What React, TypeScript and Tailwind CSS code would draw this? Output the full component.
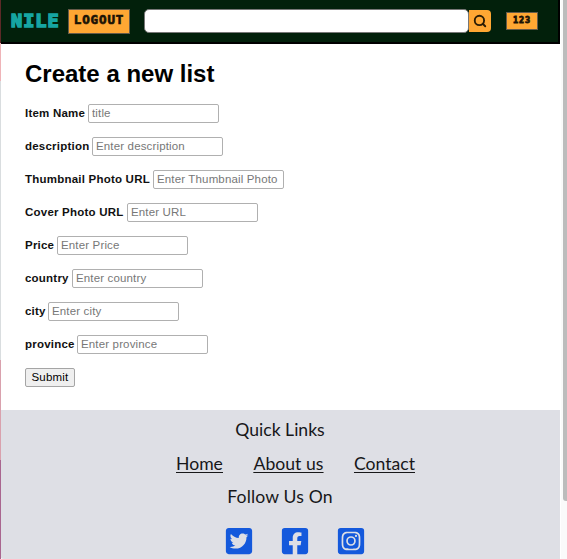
import { Search } from "lucide-react";
import { FaFacebookSquare, FaInstagramSquare, FaTwitterSquare } from "react-icons/fa";

const fields = [
  { label: "Item Name", placeholder: "title", width: "w-[63px]" },
  { label: "description", placeholder: "Enter description", width: "w-[67px]" },
  { label: "Thumbnail Photo URL", placeholder: "Enter Thumbnail Photo", width: "w-[128px]" },
  { label: "Cover Photo URL", placeholder: "Enter URL", width: "w-[102px]" },
  { label: "Price", placeholder: "Enter Price", width: "w-[32px]" },
  { label: "country", placeholder: "Enter country", width: "w-[47px]" },
  { label: "city", placeholder: "Enter city", width: "w-[23px]" },
  { label: "province", placeholder: "Enter province", width: "w-[52px]" },
];

function Header() {
  return (
    <header className="flex h-[44px] w-[560px] items-center border-r-2 border-b-2 border-black bg-[#02200b] pl-[11px] font-['DejaVu_Sans_Mono',monospace] font-bold">
      <span className="w-[57px] text-[18.5px] leading-none tracking-[1px] text-[#16a5a2] [-webkit-text-stroke:1.6px_#16a5a2]">NILE</span>
      <button className="h-[25px] w-[62px] border border-[#665a49] bg-[#ffa733] pb-px text-[12.5px] leading-none tracking-[0.9px] text-[#1b1305] [-webkit-text-stroke:0.7px_#1b1305]">LOGOUT</button>
      <input aria-label="Search" className="ml-[14px] h-6 w-[325px] rounded-[5px] border border-[#777] bg-white" />
      <button aria-label="Find" className="flex h-[22px] w-[22px] items-center justify-center rounded-r-[4px] bg-[#ffa733] text-[#2b1d05]">
        <Search size={14} strokeWidth={3.2} />
      </button>
      <button className="ml-[15px] h-[18px] w-[32px] border border-[#665a49] bg-[#ffa733] pb-px text-[8.5px] leading-none tracking-[0.8px] text-[#1b1305] [-webkit-text-stroke:0.8px_#1b1305]">123</button>
    </header>
  );
}

function ListForm() {
  return (
    <main className="h-[366px] pt-[16px] pl-[25px] font-['Liberation_Sans',sans-serif]">
      <h1 className="text-[24px] leading-[28px] font-bold text-black">Create a new list</h1>
      <form className="mt-[16px] flex flex-col items-start gap-[14px]">
        {fields.map((field) => (
          <label key={field.label} className="flex h-[19px] items-center">
            <span className={`${field.width} shrink-0 text-[11.5px] leading-none font-bold tracking-[0.22px] whitespace-nowrap text-[#111]`}>{field.label}</span>
            <input placeholder={field.placeholder} className="h-[19px] w-[131px] rounded-[2px] border border-[#b0b0b0] bg-white px-[3px] pb-px text-[11.5px] leading-none tracking-[0.15px] placeholder:text-[#777]" />
          </label>
        ))}
        <button type="button" className="h-[19px] w-[50px] rounded-[2px] border border-[#a5a5a5] bg-[#efefef] text-[11.5px] leading-none tracking-[0.2px] text-black">Submit</button>
      </form>
    </main>
  );
}

function Footer() {
  return (
    <footer className="flex h-[149px] w-[560px] flex-col items-center rounded-bl-[4px] bg-[#dedfe5] pt-[8px] font-['Lato',sans-serif] text-[17.6px] leading-6 text-[#171719]">
      <p>Quick Links</p>
      <nav className="mt-[10px] ml-[176px] flex w-[239px] justify-between self-start whitespace-nowrap underline decoration-1 underline-offset-2">
        <a>Home</a>
        <a>About us</a>
        <a>Contact</a>
      </nav>
      <p className="mt-[9px] tracking-[0.15px]">Follow Us On</p>
      <div className="mt-[17px] ml-[30px] flex gap-[26px] text-[#1459dc]">
        <FaTwitterSquare size={30} />
        <FaFacebookSquare size={30} />
        <FaInstagramSquare size={30} />
      </div>
    </footer>
  );
}

export default function App() {
  return (
    <div className="flex h-[559px] w-[567px] overflow-hidden bg-white">
      <div className="z-10 flex w-px shrink-0 flex-col">
        <div className="h-[43px] bg-[#5c2927]" />
        <div className="h-[38px] bg-[#efb4b8]" />
        <div className="h-[279px] bg-[#d9dddf]" />
        <div className="h-[100px] bg-[#d9a1ad]" />
        <div className="h-[99px] bg-[#a9668f]" />
      </div>
      <div className="-ml-px w-[561px] shrink-0">
        <Header />
        <ListForm />
        <Footer />
      </div>
      <aside className="w-[6px] bg-[#fafafa] pl-[2px]">
        <div className="h-[501px] w-[4px] rounded-bl-[3px] bg-[#bcbcbc]" />
      </aside>
    </div>
  );
}
